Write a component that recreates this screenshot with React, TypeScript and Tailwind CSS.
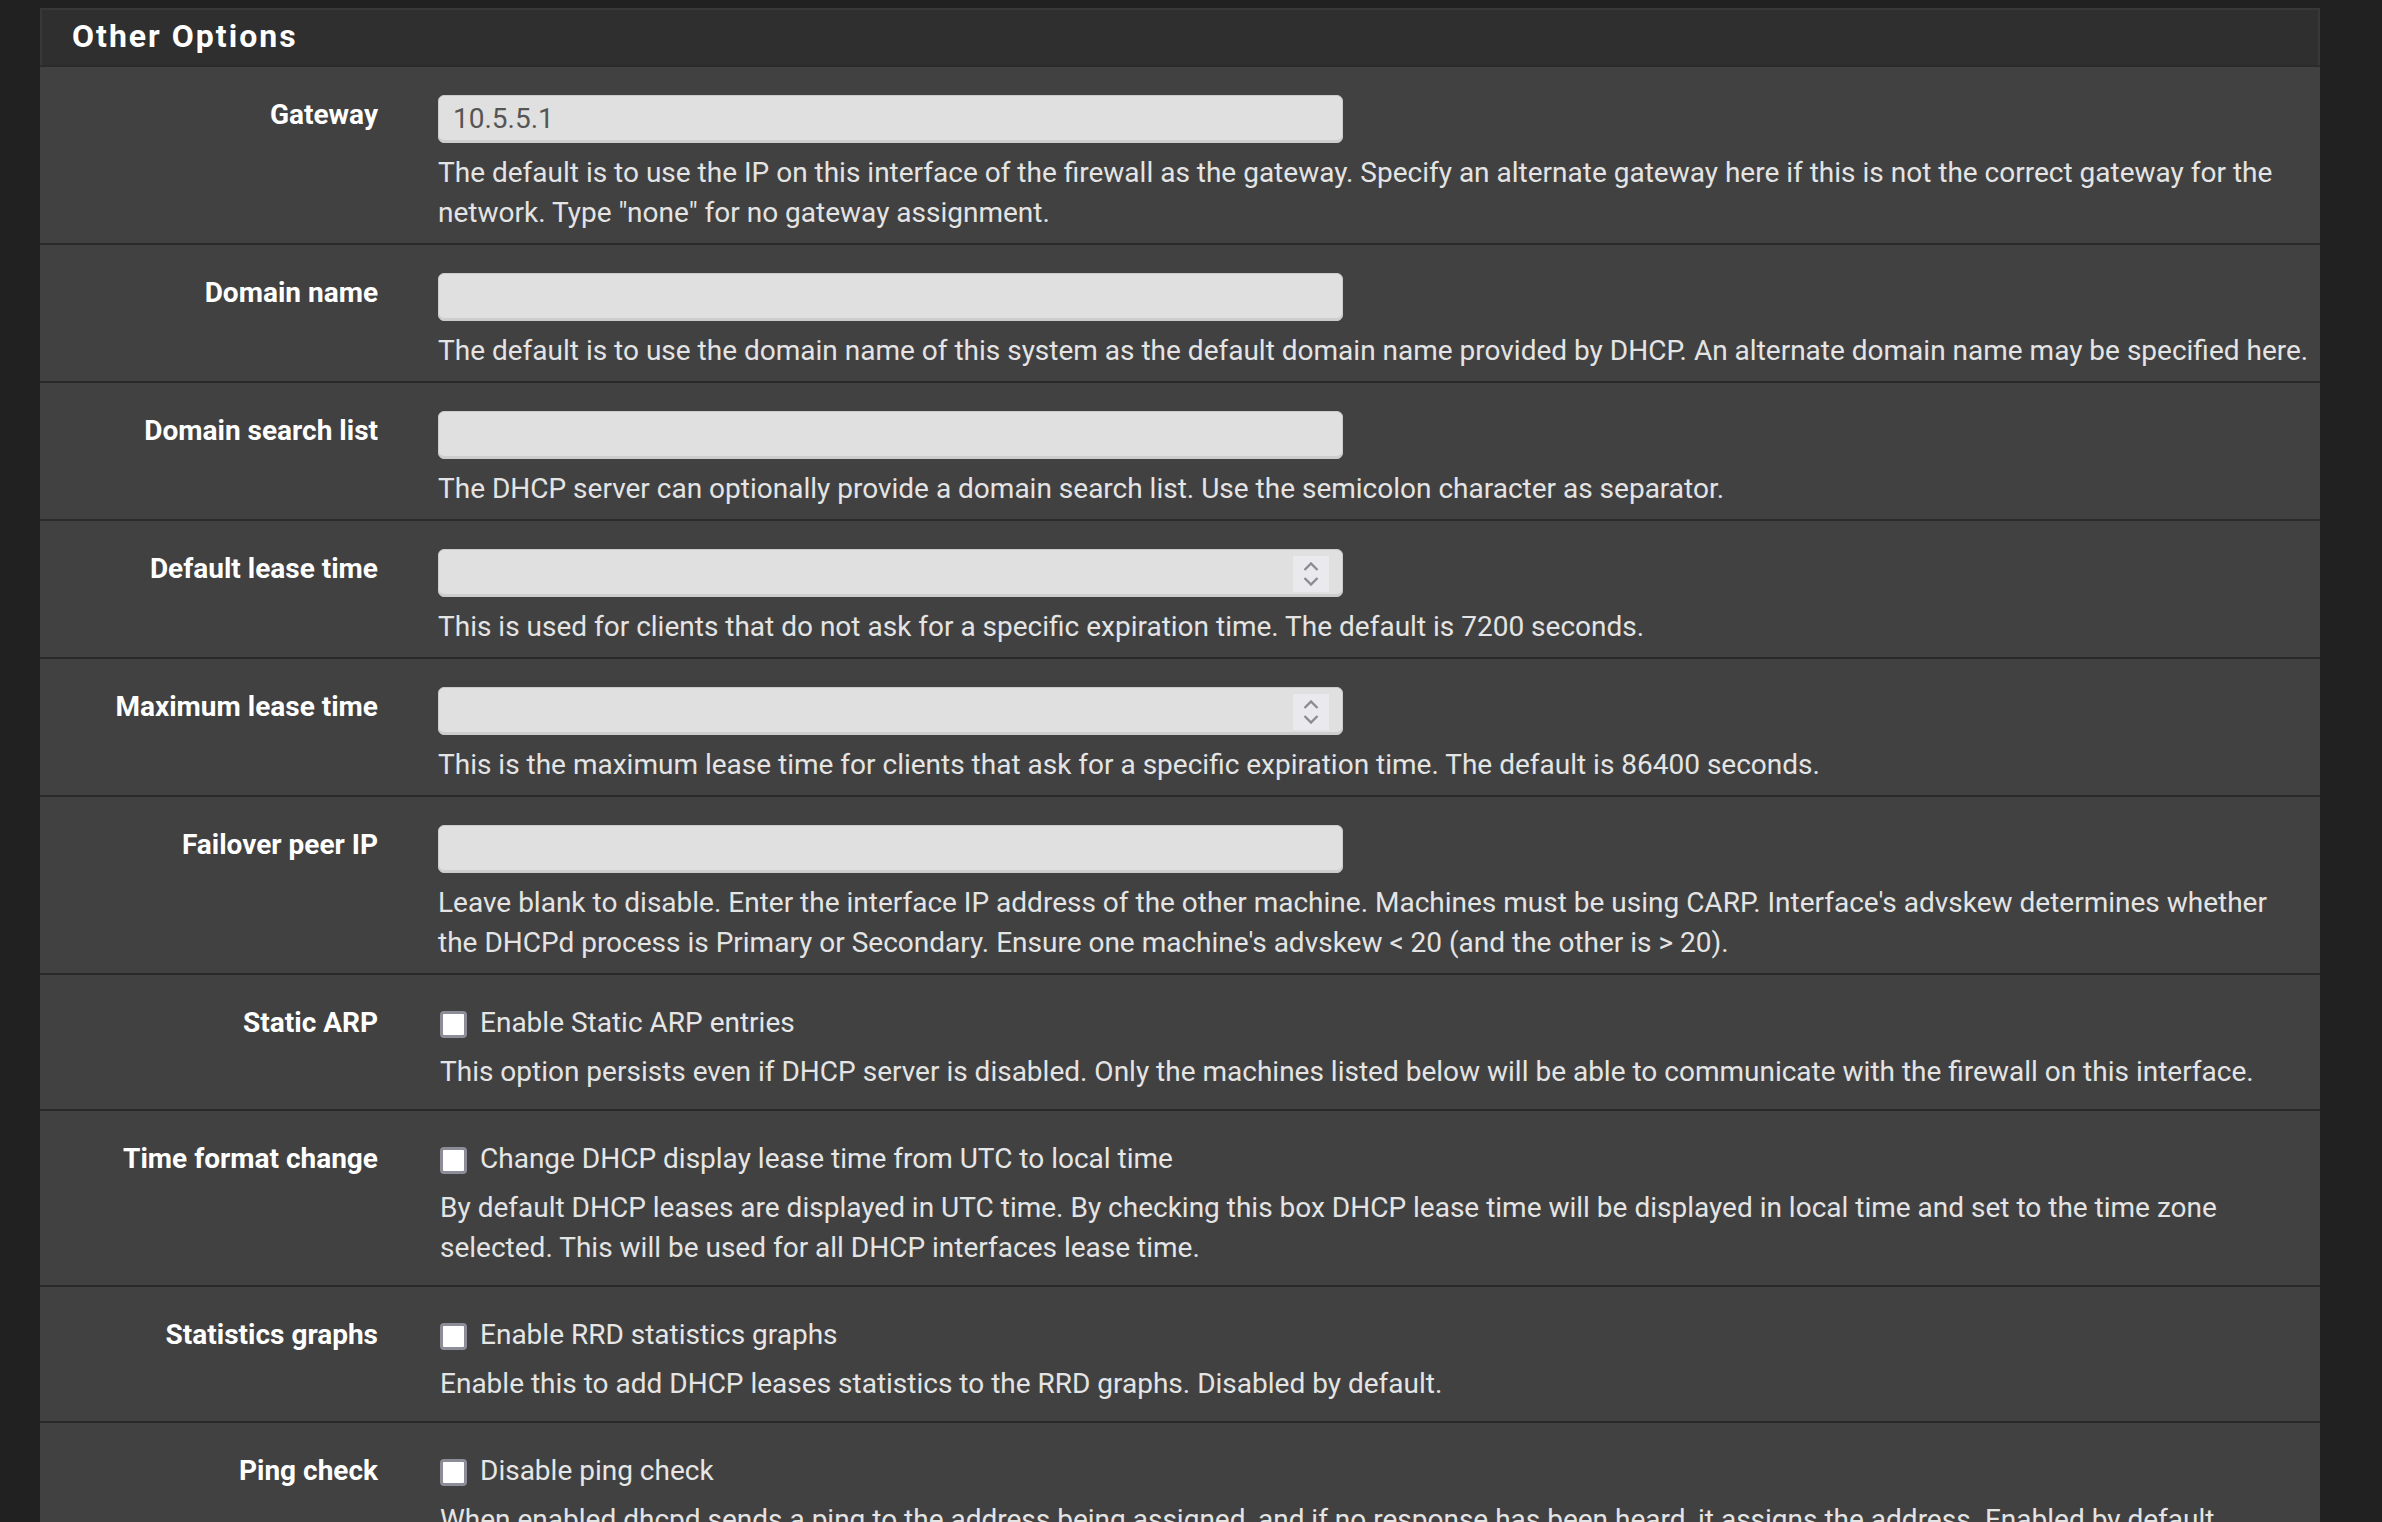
import React from "react";

type Row =
  | { kind: "input"; label: string; value?: string; number?: boolean; help: string }
  | { kind: "check"; label: string; text: string; help: string };

const rows: Row[] = [
  {
    kind: "input",
    label: "Gateway",
    value: "10.5.5.1",
    help: 'The default is to use the IP on this interface of the firewall as the gateway. Specify an alternate gateway here if this is not the correct gateway for the network. Type "none" for no gateway assignment.',
  },
  {
    kind: "input",
    label: "Domain name",
    help: "The default is to use the domain name of this system as the default domain name provided by DHCP. An alternate domain name may be specified here.",
  },
  {
    kind: "input",
    label: "Domain search list",
    help: "The DHCP server can optionally provide a domain search list. Use the semicolon character as separator.",
  },
  {
    kind: "input",
    label: "Default lease time",
    number: true,
    help: "This is used for clients that do not ask for a specific expiration time. The default is 7200 seconds.",
  },
  {
    kind: "input",
    label: "Maximum lease time",
    number: true,
    help: "This is the maximum lease time for clients that ask for a specific expiration time. The default is 86400 seconds.",
  },
  {
    kind: "input",
    label: "Failover peer IP",
    help: "Leave blank to disable. Enter the interface IP address of the other machine. Machines must be using CARP. Interface's advskew determines whether the DHCPd process is Primary or Secondary. Ensure one machine's advskew < 20 (and the other is > 20).",
  },
  {
    kind: "check",
    label: "Static ARP",
    text: "Enable Static ARP entries",
    help: "This option persists even if DHCP server is disabled. Only the machines listed below will be able to communicate with the firewall on this interface.",
  },
  {
    kind: "check",
    label: "Time format change",
    text: "Change DHCP display lease time from UTC to local time",
    help: "By default DHCP leases are displayed in UTC time. By checking this box DHCP lease time will be displayed in local time and set to the time zone selected. This will be used for all DHCP interfaces lease time.",
  },
  {
    kind: "check",
    label: "Statistics graphs",
    text: "Enable RRD statistics graphs",
    help: "Enable this to add DHCP leases statistics to the RRD graphs. Disabled by default.",
  },
  {
    kind: "check",
    label: "Ping check",
    text: "Disable ping check",
    help: "When enabled dhcpd sends a ping to the address being assigned, and if no response has been heard, it assigns the address. Enabled by default.",
  },
];

function Spinner() {
  return (
    <div className="absolute right-[13px] top-[6px] w-[36px] h-[36px] bg-[#e9e9ee] flex flex-col items-center justify-center gap-[6px]">
      <svg width="16" height="9" viewBox="0 0 16 9" fill="none">
        <path d="M1.5 8 L8 1.5 L14.5 8" stroke="#8b8b96" strokeWidth="2.4" />
      </svg>
      <svg width="16" height="9" viewBox="0 0 16 9" fill="none">
        <path d="M1.5 1 L8 7.5 L14.5 1" stroke="#8b8b96" strokeWidth="2.4" />
      </svg>
    </div>
  );
}

function FormRow({ row }: { row: Row }) {
  const isCheck = row.kind === "check";
  return (
    <div
      className={
        "flex bg-[#414141] border-t-2 border-[#2a2a2a] " +
        (isCheck ? "pt-[28px] pb-[17px]" : "pt-[28px] pb-[10px]")
      }
    >
      <div className="w-[338px] shrink-0 text-right font-bold text-white text-[28px] leading-[40px]">
        {row.label}
      </div>
      <div className="ml-[60px] pr-[8px] flex-1">
        {row.kind === "input" ? (
          <>
            <div className="relative w-[905px] h-[48px] rounded-[6px] bg-[#e0e0e0] border border-[#cbcbcb] shadow-[inset_0_-2px_0_#cdcdcd] flex items-center px-[14px] text-[28px] text-[#555]">
              {row.value}
              {row.number && <Spinner />}
            </div>
            <p className="mt-[10px] text-[28px] leading-[40px] text-[#e4e4e4]">
              {row.help}
            </p>
          </>
        ) : (
          <div className="ml-[2px]">
            <label className="flex items-center h-[40px] gap-[13px] text-[28px] text-[#e6e6e6]">
              <span className="w-[27px] h-[27px] rounded-[4px] border-[3px] border-[#8d8d97] bg-white mt-[3px]" />
              {row.text}
            </label>
            <p className="mt-[9px] text-[28px] leading-[40px] text-[#e4e4e4]">
              {row.help}
            </p>
          </div>
        )}
      </div>
    </div>
  );
}

export default function App() {
  return (
    <div className="min-h-screen bg-[#212121] pt-[8px] pl-[40px] pb-[40px] font-['Roboto',sans-serif]">
      <div className="w-[2280px]">
        {/* Panel heading */}
        <div className="h-[57px] bg-[#2f2f2f] border-t-2 border-x-2 border-[#383838] flex items-center pl-[30px] pb-[3px]">
          <h2 className="text-[32px] font-bold tracking-[2px] text-white">
            Other Options
          </h2>
        </div>
        {rows.map((r) => (
          <FormRow key={r.label} row={r} />
        ))}
      </div>
    </div>
  );
}
